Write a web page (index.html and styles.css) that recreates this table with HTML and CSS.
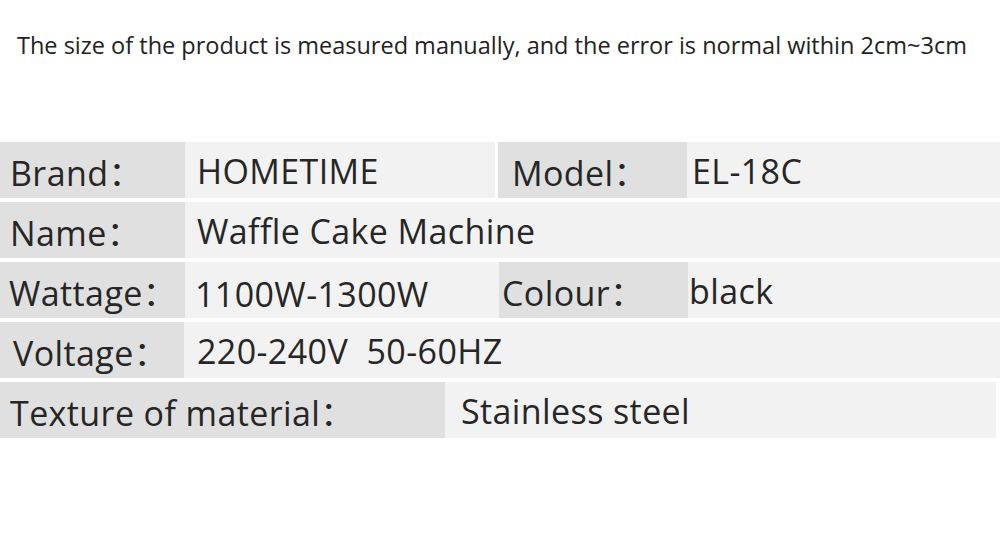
FILE: index.html
```html
<!DOCTYPE html>
<html>
<head>
<meta charset="utf-8">
<link rel="stylesheet" href="styles.css">
</head>
<body>
<p class="note">The size of the product is measured manually, and the error is normal within 2cm~3cm</p>
<div class="table">
  <div class="row">
    <div class="cell label w185">Brand：</div>
    <div class="cell value w310 pl12">HOMETIME</div>
    <div class="cell label w189 ml3 pl14">Model：</div>
    <div class="cell value grow pl5">EL-18C</div>
  </div>
  <div class="row">
    <div class="cell label w185">Name：</div>
    <div class="cell value grow pl12">Waffle Cake Machine</div>
  </div>
  <div class="row">
    <div class="cell label w185 pl9">Wattage：</div>
    <div class="cell value w314 pl10 low">1100W-1300W</div>
    <div class="cell label w189 pl3">Colour：</div>
    <div class="cell value grow pl1">black</div>
  </div>
  <div class="row">
    <div class="cell label w184 pl13">Voltage：</div>
    <div class="cell value grow pl13">220-240V&nbsp;&nbsp;50-60HZ</div>
  </div>
  <div class="row short">
    <div class="cell label w445">Texture of material：</div>
    <div class="cell value grow pl16">Stainless steel</div>
  </div>
</div>
</body>
</html>
```

FILE: styles.css
```css
html, body {
  margin: 0;
  padding: 0;
  background: #ffffff;
}

body {
  font-family: "Open Sans", "Noto Sans CJK SC", sans-serif;
  color: #262626;
}

.note {
  margin: 0;
  padding: 29px 0 0 17px;
  font-size: 23.5px;
  line-height: 32px;
  color: #222222;
  white-space: nowrap;
}

.table {
  margin-top: 81px;
  display: flex;
  flex-direction: column;
  gap: 4px;
}

.row {
  display: flex;
  height: 56px;
}

.row.short {
  width: 996px;
}

.cell {
  display: flex;
  align-items: center;
  font-size: 34px;
  letter-spacing: 0.4px;
  white-space: nowrap;
  box-sizing: border-box;
  padding-left: 10px;
  padding-top: 2px;
}

.label {
  background: #e0e0e0;
}

.value {
  background: #f2f2f2;
}

.grow { flex: 1; }
.w184 { width: 184px; }
.w185 { width: 185px; }
.w189 { width: 189px; }
.w310 { width: 310px; }
.w314 { width: 314px; }
.w445 { width: 445px; }
.ml3 { margin-left: 3px; }
.pl1 { padding-left: 1px; }
.pl3 { padding-left: 3px; }
.pl5 { padding-left: 5px; }
.pl9 { padding-left: 9px; }
.pl10 { padding-left: 10px; }
.pl12 { padding-left: 12px; }
.pl13 { padding-left: 13px; }
.pl14 { padding-left: 14px; }
.pl16 { padding-left: 16px; }
.low { padding-top: 8px; }
```
